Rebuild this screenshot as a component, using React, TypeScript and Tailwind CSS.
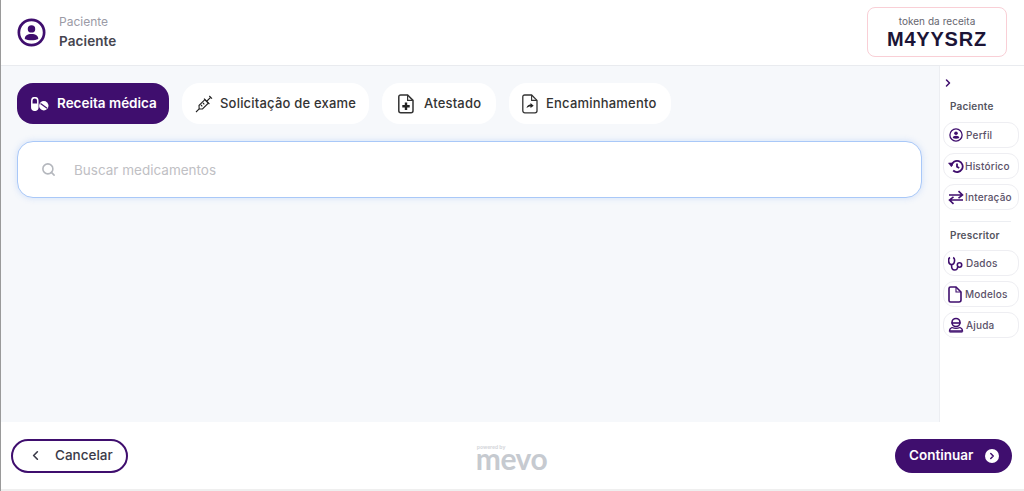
import { ChevronLeft, ChevronRight, Search } from 'lucide-react'
import type { ReactNode } from 'react'

const purple = '#3f0e6e'

function UserCircle({ size }: { size: number }) {
  return (
    <svg width={size} height={size} viewBox="0 0 28 28" className="shrink-0">
      <circle cx="14" cy="14" r="12.2" fill="none" stroke={purple} strokeWidth="2.6" />
      <circle cx="14" cy="10.5" r="3.6" fill={purple} />
      <path d="M7.5 20.2c0-3.2 2.4-4.8 6.5-4.8s6.5 1.6 6.5 4.8c-1.7 0.8-4 1.2-6.5 1.2s-4.8-.4-6.5-1.2z" fill={purple} />
    </svg>
  )
}

function PillsIcon() {
  return (
    <svg width="18" height="14" viewBox="0 0 18 14" className="shrink-0">
      <rect x="0.8" y="0.7" width="6" height="12.6" rx="3" fill="none" stroke="#fff" strokeWidth="1.5" />
      <path d="M0.8 6.5h6v3.800a3 3 0 0 1-6 0z" fill="#fff" />
      <circle cx="12.8" cy="8.800" r="4.700" fill="#fff" />
      <path d="M9.500 6.400l6.600 4.800" stroke={purple} strokeWidth="1.200" />
    </svg>
  )
}

function SyringeIcon() {
  return (
    <svg width="18" height="18" viewBox="0 0 18 18" fill="none" stroke="#222" strokeWidth="1.1" className="shrink-0">
      <path d="M4 10.5l5.8-5.8 3.5 3.5-5.8 5.8H4.2z" />
      <path d="M1 17l3.2-3.2M9 3.6l5.4 5.4M12 6l3.6-3.6M14.3 1l2.7 2.7M6 10l1.3 1.3M8 8l1.3 1.3" />
    </svg>
  )
}

function DocPlusIcon() {
  return (
    <svg width="16" height="20" viewBox="0 0 16 20" className="shrink-0">
      <path d="M2.6 1h7l5.4 5.4v10.4a2 2 0 0 1-2 2H2.8a2 2 0 0 1-2-2V2.8A1.8 1.8 0 0 1 2.6 1z" fill="none" stroke="#333" strokeWidth="1.5" />
      <path d="M9.6 1v5.4H15" fill="none" stroke="#333" strokeWidth="1.2" />
      <path d="M8 8.500v7.500M4.300 12.200h7.400" stroke="#222" strokeWidth="2.400" />
    </svg>
  )
}

function DocArrowIcon() {
  return (
    <svg width="16" height="20" viewBox="0 0 16 20" className="shrink-0">
      <path d="M2.6 1h7l5.4 5.4v10.4a2 2 0 0 1-2 2H2.8a2 2 0 0 1-2-2V2.8A1.8 1.8 0 0 1 2.6 1z" fill="none" stroke="#333" strokeWidth="1.3" />
      <path d="M9.6 1v5.4H15" fill="none" stroke="#333" strokeWidth="1.1" />
      <path d="M4.500 14c.5-2 2-3.200 4-3.400V9l3.200 2.700-3.200 2.300v-1.600c-1.600 0-2.900.5-4 1.600z" fill="#222" />
    </svg>
  )
}

function HistoryIcon() {
  return (
    <svg width="16" height="15" viewBox="0 0 16 15" fill="none" stroke={purple} strokeWidth="1.8" className="shrink-0">
      <path d="M3.500 7a5.600 5.600 0 1 1 1.700 4.500" />
      <path d="M0.500 4h4.600l-1.700 3.800z" fill={purple} strokeWidth="0.600" />
      <path d="M9 4.500v3.200l2.200 1.400" />
    </svg>
  )
}

function SwapIcon() {
  return (
    <svg width="16" height="15" viewBox="0 0 16 15" fill="none" stroke={purple} strokeWidth="1.6" className="shrink-0">
      <path d="M1 5h13M10.500 1.200L14.500 5l-4 3.200" />
      <path d="M15 10H2M5.500 6.800L1.500 10l4 3.800" />
    </svg>
  )
}

function StethoscopeIcon() {
  return (
    <svg width="16" height="15" viewBox="0 0 16 15" fill="none" stroke={purple} strokeWidth="1.6" className="shrink-0">
      <path d="M2 1.500C.9 2 .6 3 .6 4c0 2.500 1 4.500 3 4.500s3-2 3-4.500c0-1-.3-2-1.500-2.500" />
      <path d="M3.600 8.500V10c0 2.300 1 4 3 4s3-1 3.300-3.500" />
      <circle cx="11.500" cy="9" r="2.200" />
    </svg>
  )
}

function DocIcon() {
  return (
    <svg width="14" height="17" viewBox="0 0 14 17" fill="none" stroke={purple} strokeWidth="1.6" className="shrink-0">
      <path d="M2.500 1h5.500l5 5v8a2 2 0 0 1-2 2H2.500a1.500 1.500 0 0 1-1.500-1.500V2.500A1.500 1.500 0 0 1 2.500 1z" />
      <path d="M8 1v5h5" strokeWidth="1.100" />
    </svg>
  )
}

function HelpIcon() {
  return (
    <svg width="16" height="16" viewBox="0 0 16 16" fill="none" stroke={purple} strokeWidth="1.6" className="shrink-0">
      <circle cx="8" cy="5.500" r="4" />
      <path d="M3.500 6h9" />
      <path d="M4 10.500c-1.500.6-2.500 1.500-2.500 3.500h13c0-2-1-2.900-2.500-3.500-2.500 1-5.500 1-8 0z" fill="none" strokeWidth="1.300" />
      <path d="M1.500 15h13" strokeWidth="1.200" />
    </svg>
  )
}

function Tab({ icon, label, className }: { icon: ReactNode; label: string; className: string }) {
  return (
    <button className={`h-[41px] rounded-[18px] flex items-center bg-white text-[#333] text-[13px] font-medium tracking-[0.2px] ${className}`}>
      {icon}
      <span>{label}</span>
    </button>
  )
}

function SideButton({ icon, label, gap }: { icon: ReactNode; label: string; gap: string }) {
  return (
    <button className={`h-[26px] w-[76px] rounded-[11px] border border-[#eeeef2] bg-white flex items-center pl-[4px] text-[10px] text-[#5a5168] font-medium tracking-[0.2px] ${gap}`}>
      {icon}
      <span>{label}</span>
    </button>
  )
}

export default function App() {
  return (
    <div className="h-[491px] w-[1024px] flex flex-col overflow-hidden bg-[#efefef] border-l border-l-[#9a9a9a] pb-[2px] font-['Inter',sans-serif]">
      <header className="h-[66px] shrink-0 flex items-center justify-between bg-white border-b border-[#e9ebef] pl-[16px] pr-[17px]">
        <div className="flex items-center gap-[13px]">
          <UserCircle size={29} />
          <div className="flex flex-col mb-[1px]">
            <span className="text-[12px] leading-[17px] text-[#9b9ba6]">Paciente</span>
            <span className="text-[13.5px] leading-[22px] font-semibold text-[#45454f] tracking-[0.1px]">Paciente</span>
          </div>
        </div>
        <div className="w-[140px] h-[50px] mb-[1px] rounded-[8px] border border-[#f9cfd6] flex flex-col items-center justify-center">
          <span className="mt-[1px] text-[10px] leading-[14px] text-[#66666f] tracking-[0.05px]">token da receita</span>
          <span className="text-[20px] leading-[23px] font-bold text-[#1b1436] tracking-[0.8px] font-['Liberation_Sans',sans-serif]">M4YYSRZ</span>
        </div>
      </header>

      <div className="flex-1 flex min-h-0">
        <main className="flex-1 bg-[#f6f8fb] pl-[16px] pr-[17px] pt-[17px]">
          <div className="flex gap-[13px]">
            <button className="h-[41px] w-[152px] rounded-[16px] bg-[#3f0e6e] flex items-center pl-[14px] gap-[8px] text-white text-[13.5px] font-semibold">
              <PillsIcon />
              <span>Receita médica</span>
            </button>
            <Tab icon={<SyringeIcon />} label="Solicitação de exame" className="w-[187px] pl-[13px] gap-[7px]" />
            <Tab icon={<DocPlusIcon />} label="Atestado" className="w-[114px] pl-[16px] gap-[10px]" />
            <Tab icon={<DocArrowIcon />} label="Encaminhamento" className="w-[162px] pl-[13px] gap-[8px]" />
          </div>
          <div className="mt-[17px] h-[57px] rounded-[16px] bg-white border border-[#a9c8f8] shadow-[0_0_6px_rgba(120,165,245,0.3)] flex items-center pl-[23px]">
            <Search size={15} strokeWidth={2.5} className="text-[#b4b7bd] shrink-0" />
            <span className="ml-[18px] mt-[1px] text-[13.5px] text-[#c0c0c4]">Buscar medicamentos</span>
          </div>
        </main>

        <aside className="w-[85px] shrink-0 bg-white border-l border-[#eceef2] pl-[3px] flex flex-col">
          <ChevronRight size={12} strokeWidth={3} className="-ml-px mt-[11px] text-[#3f0e6e]" />
          <span className="mt-[10px] ml-[7px] text-[10px] leading-[14px] font-semibold text-[#55555f] tracking-[0.2px]">Paciente</span>
          <div className="mt-[9px] flex flex-col gap-[5px]">
            <SideButton icon={<UserCircle size={14} />} label="Perfil" gap="gap-[3px] pl-[5px]" />
            <SideButton icon={<HistoryIcon />} label="Histórico" gap="gap-[1px]" />
            <SideButton icon={<SwapIcon />} label="Interação" gap="gap-[1px]" />
          </div>
          <div className="mt-[11px] ml-[7px] w-[61px] h-px bg-[#eceef2]" />
          <span className="mt-[6px] ml-[7px] text-[10px] leading-[14px] font-semibold text-[#55555f] tracking-[0.2px]">Prescritor</span>
          <div className="mt-[8px] flex flex-col gap-[5px]">
            <SideButton icon={<StethoscopeIcon />} label="Dados" gap="gap-[2px]" />
            <SideButton icon={<DocIcon />} label="Modelos" gap="gap-[3px]" />
            <SideButton icon={<HelpIcon />} label="Ajuda" gap="gap-[2px]" />
          </div>
        </aside>
      </div>

      <footer className="h-[67px] shrink-0 flex items-center justify-between pl-[10px] pr-[12px] bg-white">
        <button className="w-[117px] h-[34px] rounded-[17px] border-2 border-[#3f0e6e] flex items-center pl-[15px] gap-[12px] text-[13.5px] font-medium text-[#3a3a48]">
          <ChevronLeft size={15} strokeWidth={2.6} />
          <span>Cancelar</span>
        </button>
        <div className="flex flex-col items-start select-none">
          <span className="ml-[1px] text-[5px] leading-[5px] font-bold text-[#d6d8dc]">powered by</span>
          <span className="text-[30px] leading-[16px] font-bold tracking-[-0.5px] text-[#c6cad0] font-['Lato',sans-serif]">mevo</span>
        </div>
        <button className="w-[117px] h-[34px] rounded-[17px] bg-[#3f0e6e] flex items-center pl-[14px] gap-[12px] text-white text-[13.5px] font-semibold">
          <span>Continuar</span>
          <span className="w-[14px] h-[14px] rounded-full bg-white flex items-center justify-center">
            <ChevronRight size={10} strokeWidth={3.5} className="text-[#3f0e6e]" />
          </span>
        </button>
      </footer>
    </div>
  )
}
